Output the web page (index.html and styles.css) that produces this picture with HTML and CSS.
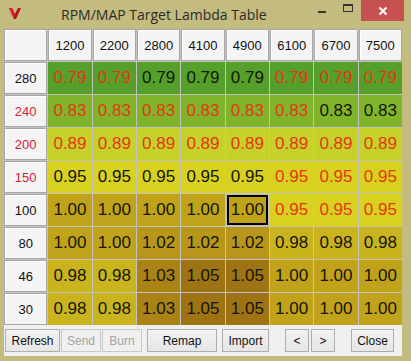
FILE: index.html
```html
<!DOCTYPE html>
<html>
<head>
<meta charset="utf-8">
<link rel="stylesheet" href="styles.css">
</head>
<body>
<div class="window">
  <div class="titlebar">
    <svg class="logo" width="14" height="14" viewBox="0 0 14 14"><path d="M1 2 L4 2 L7 8 L10 2 L13 2 L8 13 L6 13 Z" fill="#b81018"/><path d="M4 2 L7 8 L6 13 L1 2 Z" fill="#d8262e"/></svg>
    <div class="title">RPM/MAP Target Lambda Table</div>
    <div class="controls">
      <div class="ctl min"><span class="minbar"></span></div>
      <div class="ctl max"><span class="maxbox"></span></div>
      <div class="ctl close">
        <svg width="10" height="10" viewBox="0 0 10 10"><path d="M1.5 1.5 L8.5 8.5 M8.5 1.5 L1.5 8.5" stroke="#fff" stroke-width="2"/></svg>
      </div>
    </div>
  </div>
  <div class="panel">
    <div class="grid" id="grid">
      <div class="hd corner"></div>
      <div class="hd">1200</div><div class="hd">2200</div><div class="hd">2800</div><div class="hd">4100</div><div class="hd">4900</div><div class="hd">6100</div><div class="hd">6700</div><div class="hd">7500</div>

      <div class="rh">280</div>
      <div class="c v079 r">0.79</div><div class="c v079 r">0.79</div><div class="c v079">0.79</div><div class="c v079">0.79</div><div class="c v079">0.79</div><div class="c v079 r">0.79</div><div class="c v079 r">0.79</div><div class="c v079 r">0.79</div>

      <div class="rh red">240</div>
      <div class="c v083 r">0.83</div><div class="c v083 r">0.83</div><div class="c v083 r">0.83</div><div class="c v083 r">0.83</div><div class="c v083 r">0.83</div><div class="c v083 r">0.83</div><div class="c v083">0.83</div><div class="c v083">0.83</div>

      <div class="rh red">200</div>
      <div class="c v089 r">0.89</div><div class="c v089 r">0.89</div><div class="c v089 r">0.89</div><div class="c v089 r">0.89</div><div class="c v089 r">0.89</div><div class="c v089 r">0.89</div><div class="c v089 r">0.89</div><div class="c v089 r">0.89</div>

      <div class="rh red">150</div>
      <div class="c v095">0.95</div><div class="c v095">0.95</div><div class="c v095">0.95</div><div class="c v095">0.95</div><div class="c v095">0.95</div><div class="c v095 r">0.95</div><div class="c v095 r">0.95</div><div class="c v095 r">0.95</div>

      <div class="rh">100</div>
      <div class="c v100">1.00</div><div class="c v100">1.00</div><div class="c v100">1.00</div><div class="c v100">1.00</div><div class="c v100 sel">1.00</div><div class="c v095 r">0.95</div><div class="c v095 r">0.95</div><div class="c v095 r">0.95</div>

      <div class="rh">80</div>
      <div class="c v100">1.00</div><div class="c v100">1.00</div><div class="c v102">1.02</div><div class="c v102">1.02</div><div class="c v102">1.02</div><div class="c v098">0.98</div><div class="c v098">0.98</div><div class="c v098">0.98</div>

      <div class="rh">46</div>
      <div class="c v098">0.98</div><div class="c v098">0.98</div><div class="c v103">1.03</div><div class="c v105">1.05</div><div class="c v105">1.05</div><div class="c v100">1.00</div><div class="c v100">1.00</div><div class="c v100">1.00</div>

      <div class="rh">30</div>
      <div class="c v098">0.98</div><div class="c v098">0.98</div><div class="c v103">1.03</div><div class="c v105">1.05</div><div class="c v105">1.05</div><div class="c v100">1.00</div><div class="c v100">1.00</div><div class="c v100">1.00</div>
    </div>
    <div class="buttons">
      <div class="btn w-refresh">Refresh</div>
      <div class="btn w-send dis">Send</div>
      <div class="btn w-burn dis">Burn</div>
      <div class="btn w-remap">Remap</div>
      <div class="btn w-import">Import</div>
      <div class="btn w-prev">&lt;</div>
      <div class="btn w-next">&gt;</div>
      <div class="btn w-close">Close</div>
    </div>
  </div>
</div>
</body>
</html>
```
FILE: styles.css
```css
* { box-sizing: border-box; }
html, body { margin: 0; padding: 0; }
body {
  width: 411px;
  height: 361px;
  background: #c4bb7e;
  font-family: "Liberation Sans", Arial, sans-serif;
  overflow: hidden;
}
.window { display: flex; flex-direction: column; width: 411px; height: 361px; }
.titlebar {
  height: 29px;
  display: flex;
  align-items: flex-start;
  position: relative;
}
.logo { margin: 6px 0 0 8px; }
.title {
  position: absolute;
  left: 61px;
  top: 5px;
  font-family: "Open Sans", "Liberation Sans", sans-serif;
  font-size: 14px;
  color: #2b2b2b;
}
.controls { margin-left: auto; display: flex; margin-right: 7px; }
.ctl { height: 21px; display: flex; align-items: center; justify-content: center; }
.min { width: 26px; }
.minbar { display: block; width: 8px; height: 2px; background: #333; margin-top: 3px; }
.max { width: 26px; }
.maxbox { display: block; width: 10px; height: 8px; border: 1px solid #333; border-top-width: 2px; margin-top: -5px; }
.close { width: 43px; background: #c75050; }
.panel {
  margin: 0 9px 5px 4px;
  background: #f0f0f0;
  flex: 1;
  display: flex;
  flex-direction: column;
}
.grid {
  display: grid;
  grid-template-columns: repeat(9, 1fr);
  grid-template-rows: repeat(9, 32px);
  background: #c4c4bc;
  gap: 1px;
  height: 296px;
}
.hd, .rh {
  background: #f4f4f4;
  display: flex;
  align-items: center;
  justify-content: center;
  font-size: 13px;
  color: #111;
  border: 1px solid #a6a6a6;
  box-shadow: inset 1px 1px 0 #ffffff;
}
.rh.red { color: #d2203a; }
.c {
  display: flex;
  align-items: center;
  justify-content: center;
  font-size: 17px;
  color: #151505;
}
.c.r { color: #e53614; }
.sel { border: 2px solid #000; margin: 1px; }
.v079 { background: #55a02a; }
.v083 { background: #80b52b; }
.v089 { background: #c6d12a; }
.v095 { background: #d9d11f; }
.v098 { background: #c9b41d; }
.v100 { background: #c0a31a; }
.v102 { background: #b8961a; }
.v103 { background: #aa8215; }
.v105 { background: #9d7313; }
.buttons {
  display: flex;
  align-items: flex-start;
  padding: 4px 0 0 1px;
  flex: 1;
}
.btn {
  height: 23px;
  display: flex;
  align-items: center;
  justify-content: center;
  font-size: 12px;
  color: #111;
  border: 1px solid #adadad;
  background: linear-gradient(#f2f2f2, #e6e6e6);
}
.btn.dis { color: #a3a3a3; border-color: #c8c8c8; background: #f0f0f0; }
.w-refresh { width: 55px; }
.w-send { width: 40px; margin-left: 1px; }
.w-burn { width: 40px; margin-left: 1px; }
.w-remap { width: 70px; margin-left: 5px; }
.w-import { width: 47px; margin-left: 5px; }
.w-prev { width: 24px; margin-left: 16px; }
.w-next { width: 24px; margin-left: 2px; }
.w-close { width: 43px; margin-left: 16px; }
```
